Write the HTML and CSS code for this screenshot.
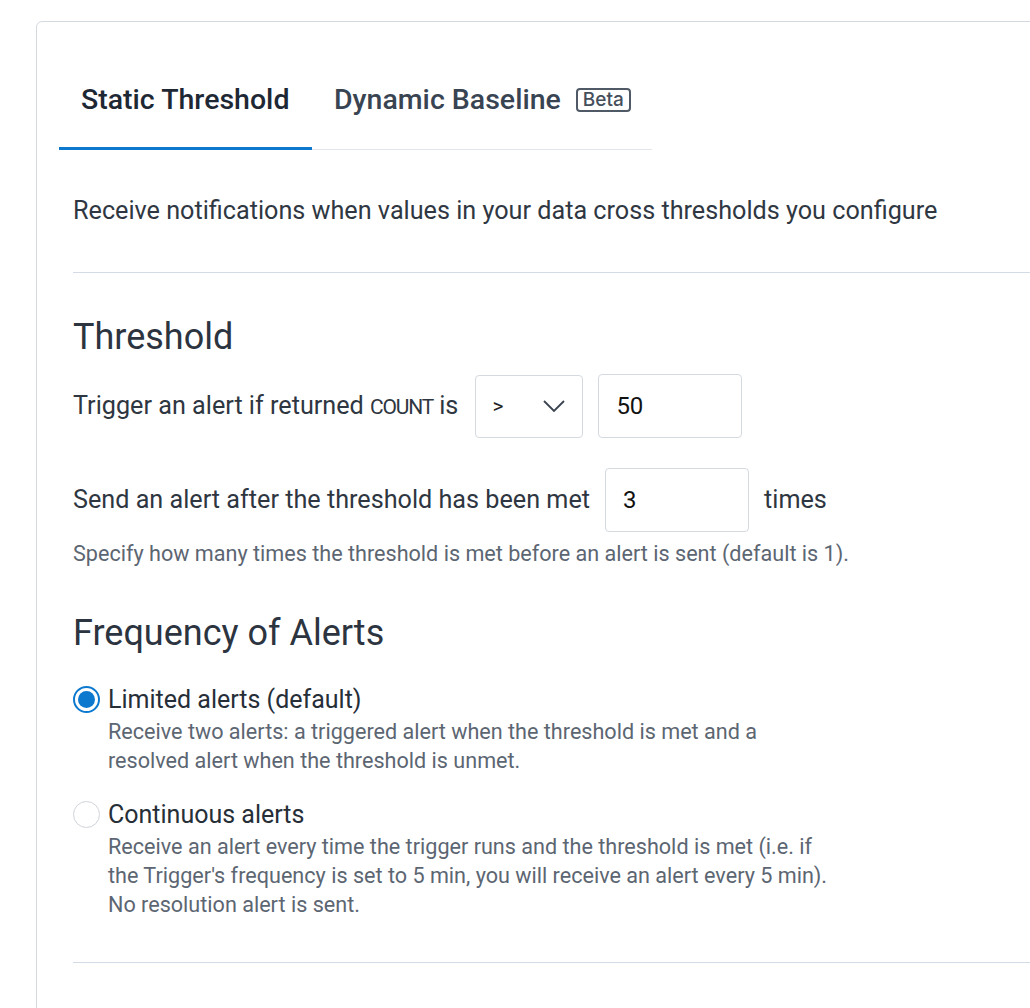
FILE: index.html
```html
<!DOCTYPE html>
<html>
<head>
<meta charset="utf-8">
<link rel="stylesheet" href="styles.css">
</head>
<body>
<div class="card">
  <div class="tabs">
    <div class="tab active">Static Threshold</div>
    <div class="tab">Dynamic Baseline <span class="badge">Beta</span></div>
  </div>
  <div class="content">
    <p class="intro">Receive notifications when values in your data cross thresholds you configure</p>
    <hr class="rule">
    <h2 class="heading">Threshold</h2>
    <div class="row row-first">
      <span>Trigger an alert if returned <span class="code">COUNT</span> is</span>
      <div class="select">
        <span>&gt;</span>
        <svg class="chev" width="22" height="12" viewBox="0 0 22 12"><path d="M1 1 L11 11 L21 1" fill="none" stroke="#3a4350" stroke-width="1.8"/></svg>
      </div>
      <div class="input wide">50</div>
    </div>
    <div class="row row-second">
      <span>Send an alert after the threshold has been met</span>
      <div class="input wide">3</div>
      <span>times</span>
    </div>
    <p class="help">Specify how many times the threshold is met before an alert is sent (default is 1).</p>
    <h2 class="heading heading-freq">Frequency of Alerts</h2>
    <div class="option">
      <span class="radio checked"></span>
      <div class="option-text">
        <div class="option-label">Limited alerts (default)</div>
        <div class="option-desc">Receive two alerts: a triggered alert when the threshold is met and a<br>resolved alert when the threshold is unmet.</div>
      </div>
    </div>
    <div class="option option-second">
      <span class="radio"></span>
      <div class="option-text">
        <div class="option-label">Continuous alerts</div>
        <div class="option-desc">Receive an alert every time the trigger runs and the threshold is met (i.e. if<br>the Trigger's frequency is set to 5 min, you will receive an alert every 5 min).<br>No resolution alert is sent.</div>
      </div>
    </div>
    <hr class="rule rule-bottom">
  </div>
</div>
</body>
</html>
```
FILE: styles.css
```css
html, body {
  margin: 0;
  padding: 0;
  background: #ffffff;
  overflow: hidden;
}
body {
  font-family: Roboto, "Liberation Sans", sans-serif;
  color: #2e3641;
  height: 1008px;
}
.card {
  margin: 21px -40px 0 36px;
  border: 1px solid #d3d9df;
  border-radius: 6px;
  height: 1100px;
}
.tabs {
  display: flex;
  margin: 40px 0 0 22px;
  width: 593px;
  border-bottom: 1px solid #e2e5e9;
}
.tab {
  font-size: 28.5px;
  font-weight: 500;
  line-height: 32px;
  padding: 22px 20px 31px 22px;
  color: #394452;
  display: flex;
  align-items: center;
  margin-bottom: -1px;
  border-bottom: 3px solid transparent;
  white-space: nowrap;
}
.tab.active {
  color: #1d2834;
  border-bottom-color: #0c79cf;
  width: 253px;
  box-sizing: border-box;
}
.badge {
  font-family: Inter, Roboto, sans-serif;
  font-weight: 500;
  font-size: 19px;
  line-height: 20px;
  border: 2px solid #505a66;
  border-radius: 4px;
  padding: 0 5px;
  margin-left: 15px;
  color: #454f5b;
}
.content {
  padding-left: 36px;
}
.intro {
  margin: 46px 0 0;
  font-size: 25.2px;
  line-height: 30px;
  color: #2f3742;
  white-space: nowrap;
}
.rule {
  border: 0;
  border-top: 1px solid #d3dce6;
  margin: 46px 0 0;
}
.heading {
  margin: 43px 0 0;
  font-size: 36px;
  font-weight: 400;
  line-height: 42px;
  color: #2c343f;
}
.heading-freq {
  margin-top: 45px;
}
.row {
  display: flex;
  align-items: center;
  gap: 15px;
  font-size: 25.2px;
  line-height: 30px;
  white-space: nowrap;
}
.row-first {
  margin-top: 16px;
}
.row-second {
  margin-top: 30px;
}
.code {
  font-size: 21px;
  letter-spacing: -1.2px;
}
.select {
  margin-left: 2px;
  width: 108px;
  height: 63px;
  box-sizing: border-box;
  border: 1px solid #d5dae0;
  border-radius: 4px;
  display: flex;
  align-items: center;
  justify-content: space-between;
  padding: 0 17px 0 16px;
  font-size: 21px;
  color: #222;
}
.input {
  height: 64px;
  box-sizing: border-box;
  border: 1px solid #d5dae0;
  border-radius: 4px;
  display: flex;
  align-items: center;
  padding-left: 17px;
  font-size: 24px;
  color: #111;
}
.input.wide {
  width: 144px;
}
.help {
  margin: 9px 0 0;
  font-size: 21.6px;
  line-height: 26px;
  color: #5c6672;
  white-space: nowrap;
}
.option {
  display: flex;
  gap: 8px;
  margin-top: 31px;
}
.option-second {
  margin-top: 25px;
}
.radio {
  width: 27px;
  height: 27px;
  box-sizing: border-box;
  border-radius: 50%;
  border: 1px solid #cfd3da;
  margin-top: 1px;
  flex: none;
  position: relative;
}
.radio.checked {
  border: 2px solid #0c79cf;
}
.radio.checked::after {
  content: "";
  position: absolute;
  left: 3px;
  top: 3px;
  width: 17px;
  height: 17px;
  border-radius: 50%;
  background: #0c79cf;
}
.option-label {
  font-size: 25px;
  line-height: 30px;
  color: #262e38;
}
.option-desc {
  margin-top: 2px;
  font-size: 21.6px;
  line-height: 29px;
  color: #5c6672;
  white-space: nowrap;
}
.rule-bottom {
  margin-top: 43px;
}
```
